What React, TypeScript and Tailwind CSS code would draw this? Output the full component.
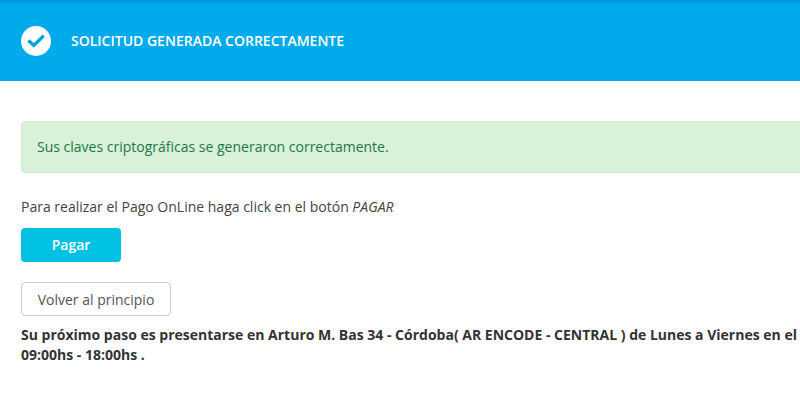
export default function App() {
    return (
        <div className="w-[800px] h-[400px] overflow-hidden bg-white font-['Open_Sans',sans-serif] text-[14px] text-[#444]">
            {/* Header */}
            <div className="h-[81px] flex items-center pl-[21px] bg-[linear-gradient(#0098d8,#00aaeb_5px)] text-white">
                <div className="w-[30px] h-[30px] rounded-full bg-white flex items-center justify-center">
                    <svg width="18" height="18" viewBox="0 0 18 18" fill="none">
                        <path d="M1.5 8.5 L6.8 13.5 L16.8 3.6" stroke="#00a0dc" strokeWidth="3.4" />
                    </svg>
                </div>
                <h1 className="ml-5 text-[14px] font-semibold">SOLICITUD GENERADA CORRECTAMENTE</h1>
            </div>

            {/* Content */}
            <div className="w-[1000px] pl-[21px] pt-10">
                <div className="h-[52px] flex items-center pl-[15px] pb-[2px] bg-[#d9f0d9] border border-[#d0e9c6] rounded text-[#1b7a43]">
                    Sus claves criptográficas se generaron correctamente.
                </div>
                <p className="mt-6 leading-5">
                    Para realizar el Pago OnLine haga click en el botón <em>PAGAR</em>
                </p>
                <button className="block mt-[11px] pb-[2px] w-[100px] h-[34px] rounded bg-[#00c1e2] text-white font-semibold">
                    Pagar
                </button>
                <button className="block mt-5 w-[150px] h-[34px] rounded border border-[#ccc] bg-white text-[#555]">
                    Volver al principio
                </button>
                <p className="mt-[9px] font-bold leading-[19.6px] text-[#333]">
                    Su próximo paso es presentarse en Arturo M. Bas 34 - Córdoba( AR ENCODE - CENTRAL ) de Lunes a Viernes en el
                    <br />
                    09:00hs - 18:00hs .
                </p>
            </div>
        </div>
    );
}
